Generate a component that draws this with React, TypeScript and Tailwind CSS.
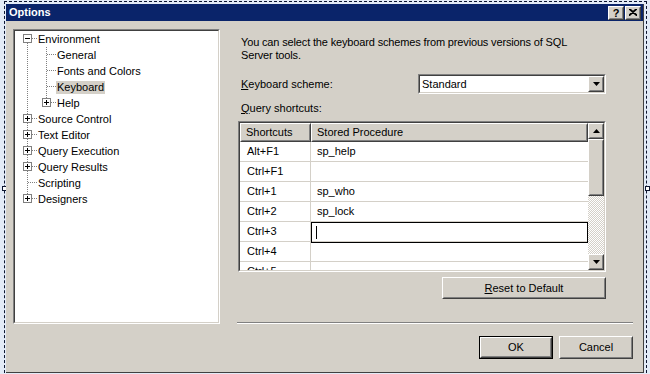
import React from 'react';

type Line = 'none' | 'full' | 'top' | 'bottom';

type TreeRow = {
  label: string;
  guides: Line[];
  line: Line;
  box?: '+' | '-';
  selected?: boolean;
};

const tree: TreeRow[] = [
  { label: 'Environment', guides: [], line: 'bottom', box: '-' },
  { label: 'General', guides: ['full'], line: 'full' },
  { label: 'Fonts and Colors', guides: ['full'], line: 'full' },
  { label: 'Keyboard', guides: ['full'], line: 'full', selected: true },
  { label: 'Help', guides: ['full'], line: 'top', box: '+' },
  { label: 'Source Control', guides: [], line: 'full', box: '+' },
  { label: 'Text Editor', guides: [], line: 'full', box: '+' },
  { label: 'Query Execution', guides: [], line: 'full', box: '+' },
  { label: 'Query Results', guides: [], line: 'full', box: '+' },
  { label: 'Scripting', guides: [], line: 'full' },
  { label: 'Designers', guides: [], line: 'top', box: '+' },
];

const shortcuts: { key: string; proc: string; editing?: boolean }[] = [
  { key: 'Alt+F1', proc: 'sp_help' },
  { key: 'Ctrl+F1', proc: '' },
  { key: 'Ctrl+1', proc: 'sp_who' },
  { key: 'Ctrl+2', proc: 'sp_lock' },
  { key: 'Ctrl+3', proc: '', editing: true },
  { key: 'Ctrl+4', proc: '' },
  { key: 'Ctrl+5', proc: '' },
];

// dotted tree guide for one indent level
function Guide({ line, hline, box, width }: { line: Line; hline?: boolean; box?: '+' | '-'; width: number }) {
  return (
    <svg width={width} height={16} className="block shrink-0" shapeRendering="crispEdges">
      {(line === 'full' || line === 'top') && (
        <line x1={12.5} y1={0} x2={12.5} y2={box ? 3 : 8} stroke="#808080" strokeDasharray="1 1" />
      )}
      {(line === 'full' || line === 'bottom') && (
        <line x1={12.5} y1={box ? 12 : 8} x2={12.5} y2={16} stroke="#808080" strokeDasharray="1 1" />
      )}
      {hline && <line x1={box ? 17 : 13} y1={7.5} x2={width} y2={7.5} stroke="#808080" strokeDasharray="1 1" />}
      {box && (
        <>
          <rect x={8.5} y={3.5} width={8} height={8} fill="#fff" stroke="#808080" />
          <line x1={10} y1={7.5} x2={15} y2={7.5} stroke="#000" />
          {box === '+' && <line x1={12.5} y1={5} x2={12.5} y2={10} stroke="#000" />}
        </>
      )}
    </svg>
  );
}

function Sunken({ className, innerClassName, children }: { className?: string; innerClassName?: string; children?: React.ReactNode }) {
  return (
    <div className={`border border-t-[#808080] border-l-[#808080] border-r-white border-b-white ${className ?? ''}`}>
      <div className={`h-full border border-t-[#404040] border-l-[#404040] border-r-[#d4d0c8] border-b-[#d4d0c8] ${innerClassName ?? ''}`}>
        {children}
      </div>
    </div>
  );
}

function Raised({ className, children }: { className?: string; children?: React.ReactNode }) {
  return (
    <div className={`border border-t-white border-l-white border-r-[#404040] border-b-[#404040] bg-[#d4d0c8] ${className ?? ''}`}>
      <div className="flex h-full items-center justify-center border border-t-[#d4d0c8] border-l-[#d4d0c8] border-r-[#808080] border-b-[#808080]">
        {children}
      </div>
    </div>
  );
}

function Arrow({ down }: { down?: boolean }) {
  return (
    <svg width="7" height="4" className="block">
      <polygon points={down ? '0,0 7,0 3.5,4' : '0,4 7,4 3.5,0'} fill="#000" />
    </svg>
  );
}

export default function App() {
  return (
    <div className="relative h-[374px] w-[650px] overflow-hidden bg-[#e3ebf7] pl-[6px] pt-[4px] font-['Liberation_Sans',Arial,sans-serif] text-[11px] leading-[13px] text-black">
      {/* designer selection frame */}
      <div className="pointer-events-none absolute top-[1px] right-[3px] bottom-[-4px] left-[4px] border border-dashed border-[#0c1530]"></div>
      <div className="absolute top-[186px] left-[2px] h-[5px] w-[5px] border border-[#0c1530] bg-white"></div>
      <div className="absolute top-[186px] left-[645px] h-[5px] w-[5px] border border-[#0c1530] bg-white"></div>

      <div className="relative flex h-[369px] w-[638px] flex-col border-r border-b border-r-[#404040] border-b-[#404040] bg-[#d4d0c8]">
        {/* title bar */}
        <div className="flex h-[17px] items-center justify-between bg-[#0a246a] pr-[2px] pl-[3px]">
          <span className="font-bold text-white">Options</span>
          <div className="flex gap-[1px]">
            <Raised className="h-[14px] w-[16px]">
              <span className="text-[11px] leading-[10px] font-bold">?</span>
            </Raised>
            <Raised className="h-[14px] w-[16px]">
              <svg width="8" height="7" className="block">
                <path d="M0 0 L8 7 M8 0 L0 7 M1 0 L8 6 M7 0 L0 6" stroke="#000" strokeWidth="1.2" />
              </svg>
            </Raised>
          </div>
        </div>

        {/* body */}
        <div className="flex flex-1 flex-col pt-[8px] pl-[7px]">
          <div className="flex h-[295px]">
            <Sunken className="w-[207px]" innerClassName="bg-white">
              {tree.map((row) => (
                <div key={row.label} className="flex h-[16px] items-center">
                  {row.guides.map((g, i) => (
                    <Guide key={i} line={g} width={19} />
                  ))}
                  <Guide line={row.line} hline box={row.box} width={22} />
                  <span className={row.selected ? 'bg-[#d4d0c8] px-[1px]' : 'px-[1px]'}>{row.label}</span>
                </div>
              ))}
            </Sunken>

            <div className="ml-[17px] flex w-[396px] flex-col">
              <p className="mt-[7px] pl-[4px] tracking-[-0.15px]">
                You can select the keyboard schemes from previous versions of SQL
                <br />
                Server tools.
              </p>

              <div className="mt-[12px] flex items-center">
                <span className="w-[181px] pl-[4px]">
                  <span className="underline">K</span>eyboard scheme:
                </span>
                <Sunken className="h-[20px] w-[188px]" innerClassName="flex items-center bg-white">
                  <span className="flex-1 pl-[2px]">Standard</span>
                  <Raised className="h-[16px] w-[16px]">
                    <Arrow down />
                  </Raised>
                </Sunken>
              </div>

              <p className="mt-[8px] pl-[4px]">
                <span className="underline">Q</span>uery shortcuts:
              </p>

              <Sunken className="mt-[6px] ml-[1px] h-[151px] w-[368px]" innerClassName="flex bg-white">
                <div className="w-[348px] overflow-hidden">
                  <div className="flex h-[19px]">
                    <Raised className="w-[71px]">
                      <span className="w-full pl-[4px]">Shortcuts</span>
                    </Raised>
                    <Raised className="w-[277px]">
                      <span className="w-full pl-[4px]">Stored Procedure</span>
                    </Raised>
                  </div>
                  {shortcuts.map((s) => (
                    <div key={s.key} className="flex h-[20px] border-b border-[#d4d0c8]">
                      <div className="flex w-[71px] items-center border-r border-[#d4d0c8] pl-[7px]">{s.key}</div>
                      {s.editing ? (
                        <div className="-mb-px flex h-[21px] w-[277px] items-center border border-black pl-[4px]">
                          <span className="h-[13px] w-[1px] bg-black"></span>
                        </div>
                      ) : (
                        <div className="flex w-[277px] items-center pl-[6px]">{s.proc}</div>
                      )}
                    </div>
                  ))}
                </div>

                {/* vertical scrollbar */}
                <div className="flex w-[16px] flex-col">
                  <Raised className="h-[16px]">
                    <Arrow />
                  </Raised>
                  <Raised className="h-[57px]" />
                  <div className="flex-1 bg-[repeating-conic-gradient(#d4d0c8_0_25%,#ffffff_0_50%)] bg-[length:2px_2px]"></div>
                  <Raised className="h-[16px]">
                    <Arrow down />
                  </Raised>
                </div>
              </Sunken>

              <Raised className="mt-[5px] ml-[205px] h-[22px] w-[164px]">
                <span>
                  <span className="underline">R</span>eset to Default
                </span>
              </Raised>

              <div className="mt-auto h-[2px] border-t border-b border-t-[#808080] border-b-white"></div>
            </div>
          </div>

          <div className="mt-[12px] flex justify-end gap-[6px] pr-[10px]">
            <div className="h-[23px] w-[74px] border border-black">
              <Raised className="h-full">
                <span>OK</span>
              </Raised>
            </div>
            <Raised className="h-[23px] w-[74px]">
              <span>Cancel</span>
            </Raised>
          </div>
        </div>
      </div>
    </div>
  );
}
